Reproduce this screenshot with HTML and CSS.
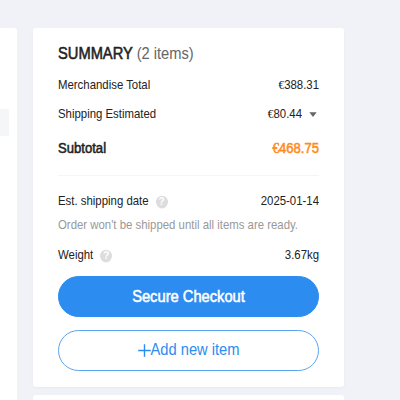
FILE: index.html
```html
<!DOCTYPE html>
<html lang="en">
<head>
  <meta charset="UTF-8">
  <title>Cart Summary</title>
  <meta name="viewport" content="width=device-width, initial-scale=1.0">
  <link rel="stylesheet" href="styles.css">
</head>
<body>

<div class="page">
  <div class="cart-list">
    <div class="cart-row"></div>
  </div>

  <div class="sidebar">
    <div class="card summary">
      <h2 class="title"><span class="strong">SUMMARY</span> <span class="count">(2 items)</span></h2>

      <div class="row merchandise">
        <span>Merchandise Total</span>
        <span><span class="euro">€</span>388.31</span>
      </div>
      <div class="row shipping">
        <span>Shipping Estimated</span>
        <span class="toggle"><span><span class="euro">€</span>80.44</span>
          <svg class="arrow" viewBox="0 0 8 5"><path d="M0.3 0.3h7.4L4 4.7z"/></svg>
        </span>
      </div>
      <div class="row subtotal strong">
        <span>Subtotal</span>
        <span class="price"><span class="euro">€</span>468.75</span>
      </div>

      <div class="row date">
        <span class="label">Est. shipping date <i class="help">?</i></span>
        <span>2025-01-14</span>
      </div>
      <p class="note">Order won't be shipped until all items are ready.</p>
      <div class="row weight">
        <span class="label">Weight <i class="help">?</i></span>
        <span>3.67kg</span>
      </div>

      <button class="btn checkout strong"><span>Secure Checkout</span></button>
      <button class="btn add-item">
        <svg class="plus" viewBox="0 0 13 13"><path d="M6.5 0.2v12.6M0.2 6.5h12.6"/></svg><span>Add new item</span>
      </button>
    </div>

    <div class="card next"></div>
  </div>
</div>

</body>
</html>
```

FILE: styles.css
```css
* {
  box-sizing: border-box;
  margin: 0;
  padding: 0;
}

body {
  height: 100vh;
  background: #f0f2f7;
  color: #222;
  font-family: "Liberation Sans", Arial, sans-serif;
  font-size: 11.4px;
}

.page {
  display: flex;
  gap: 16px;
  height: 100%;
  padding-top: 28px;
}

.cart-list {
  width: 17px;
  padding-top: 81px;
  background: #fff;
  border-radius: 0 3px 0 0;
}

.cart-row {
  width: 9px;
  height: 27px;
  background: #f5f6f8;
}

.sidebar {
  display: flex;
  flex-direction: column;
  width: 311px;
}

.card {
  background: #fff;
  border-radius: 3px;
  box-shadow: 0 1px 3px rgba(0, 0, 0, 0.04);
}

.summary {
  height: 359px;
  padding: 16px 25px 0 25px;
}

/* slightly condensed lettering */
.title,
.row > span,
.note,
.btn span {
  transform: scaleY(1.07);
}

.title {
  height: 20px;
  line-height: 20px;
  font-size: 14.7px;
  font-weight: normal;
}

.strong {
  -webkit-text-stroke: 0.5px currentColor;
}

.count {
  color: #666;
}

.row {
  display: flex;
  justify-content: space-between;
  align-items: center;
  height: 16px;
  line-height: 16px;
}

.euro {
  font-family: "Liberation Serif", serif;
}

.merchandise {
  margin-top: 13px;
}

.shipping {
  margin-top: 13px;
}

.toggle {
  display: flex;
  align-items: center;
  gap: 7px;
  padding-right: 2px;
}

.arrow {
  width: 8px;
  height: 5px;
  fill: #666;
}

.subtotal {
  height: 45px;
  padding-bottom: 8px;
  margin-top: 9px;
  border-bottom: 1px solid #f5f5f5;
  font-size: 13.1px;
}

.price {
  color: #ff8a1e;
}

.date {
  margin-top: 17px;
}

.label {
  display: flex;
  align-items: center;
  gap: 7px;
}

.help {
  width: 12px;
  height: 12px;
  margin-top: 1px;
  border-radius: 50%;
  background: #ddd;
  color: #fff;
  font-size: 10px;
  font-style: normal;
  font-weight: bold;
  line-height: 12px;
  text-align: center;
}

.note {
  height: 16px;
  margin-top: 8px;
  line-height: 16px;
  color: #999;
}

.weight {
  margin-top: 14px;
}

.btn {
  display: flex;
  justify-content: center;
  align-items: center;
  width: 100%;
  height: 41px;
  border: 1px solid #2d8cf0;
  border-radius: 21px;
  font-family: inherit;
  font-size: 14.7px;
  cursor: pointer;
}

.checkout {
  margin-top: 13px;
  background: #2d8cf0;
  color: #fff;
}

.add-item {
  margin-top: 13px;
  padding-bottom: 2px;
  background: #fff;
  border-color: #57a3f3;
  color: #2d8cf0;
}

.plus {
  width: 13px;
  height: 13px;
  margin-top: 2px;
  stroke: #2d8cf0;
  stroke-width: 1.4;
}

.next {
  flex: 1;
  margin-top: 8px;
  border-radius: 3px 3px 0 0;
  box-shadow: none;
}
```
